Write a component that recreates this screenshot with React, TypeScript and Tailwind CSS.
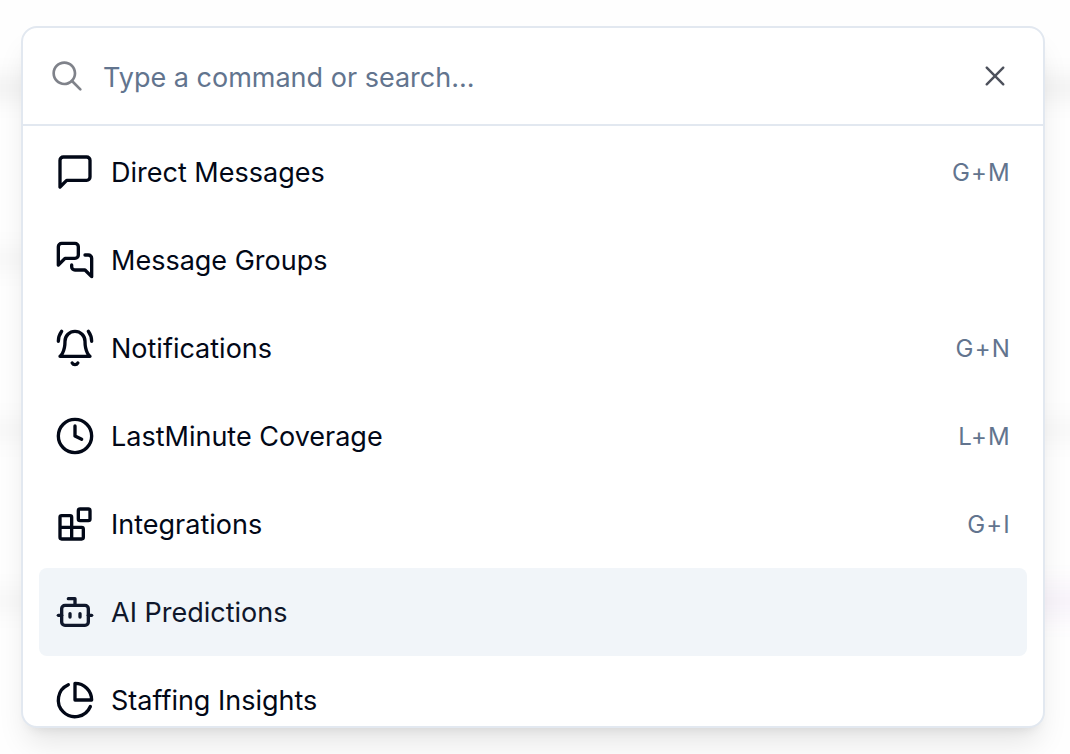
import { useState } from 'react'
import type { ReactNode } from 'react'
import { RxCross2, RxMagnifyingGlass } from 'react-icons/rx'
import { Clock } from 'lucide-react'

type Command = {
  label: string
  icon: ReactNode
  shortcut?: string
}

function Icon({ children }: { children: ReactNode }) {
  return (
    <svg viewBox="0 0 24 24" fill="none" stroke="currentColor" strokeWidth="2" strokeLinecap="round" strokeLinejoin="round" className="size-10 shrink-0" aria-hidden="true">
      {children}
    </svg>
  )
}

const commands: Command[] = [
  {
    label: 'Direct Messages',
    shortcut: 'G+M',
    icon: (
      <Icon>
        <path d="M21 15a2 2 0 0 1-2 2H7l-4 4V5a2 2 0 0 1 2-2h14a2 2 0 0 1 2 2z" />
      </Icon>
    ),
  },
  {
    label: 'Message Groups',
    icon: (
      <Icon>
        <path d="M14 9a2 2 0 0 1-2 2H6l-4 4V4c0-1.1.9-2 2-2h8a2 2 0 0 1 2 2v5Z" />
        <path d="M18 9h2a2 2 0 0 1 2 2v11l-4-4h-6a2 2 0 0 1-2-2v-1" />
      </Icon>
    ),
  },
  {
    label: 'Notifications',
    shortcut: 'G+N',
    icon: (
      <Icon>
        <path d="M6 8a6 6 0 0 1 12 0c0 7 3 9 3 9H3s3-2 3-9" />
        <path d="M10.3 21a1.94 1.94 0 0 0 3.4 0" />
        <path d="M4 2C2.8 3.7 2 5.7 2 8" />
        <path d="M22 8c0-2.3-.8-4.3-2-6" />
      </Icon>
    ),
  },
  { label: 'LastMinute Coverage', shortcut: 'L+M', icon: <Clock className="size-10 shrink-0" /> },
  {
    label: 'Integrations',
    shortcut: 'G+I',
    icon: (
      <Icon>
        <rect width="7" height="7" x="14" y="3" rx="1" />
        <path d="M10 21V8a1 1 0 0 0-1-1H4a1 1 0 0 0-1 1v12a1 1 0 0 0 1 1h12a1 1 0 0 0 1-1v-5a1 1 0 0 0-1-1H3" />
      </Icon>
    ),
  },
  {
    label: 'AI Predictions',
    icon: (
      <Icon>
        <path d="M12 8V4H8" />
        <rect width="16" height="12" x="4" y="8" rx="2" />
        <path d="M2 14h2" />
        <path d="M20 14h2" />
        <path d="M15 13v2" />
        <path d="M9 13v2" />
      </Icon>
    ),
  },
  {
    label: 'Staffing Insights',
    icon: (
      <Icon>
        <path d="M21.21 15.89A10 10 0 1 1 8 2.83" />
        <path d="M22 12A10 10 0 0 0 12 2v10z" />
      </Icon>
    ),
  },
]

// blurred page rows that show on both sides of the dialog
function Backdrop() {
  return (
    <div className="absolute inset-0 overflow-hidden bg-[#fefefe]" aria-hidden="true">
      <div className="-mx-8 flex flex-col gap-[155px] pt-20 blur-md">
        <div className="h-4 bg-black/7" />
        <div className="mr-20 h-4 bg-black/4" />
        <div className="h-4 bg-black/4" />
        <div className="flex h-4 items-center">
          <div className="h-4 flex-1 bg-black/4" />
          <div className="h-8 w-20 bg-purple-800/5" />
        </div>
      </div>
    </div>
  )
}

export default function App() {
  const [query, setQuery] = useState('')
  const [active, setActive] = useState('AI Predictions')

  const results = commands.filter(c => c.label.toLowerCase().includes(query.toLowerCase()))

  return (
    <main className="relative min-h-screen overflow-hidden pt-[26px] pr-[25px] pl-[21px] font-[Inter,sans-serif]">
      <Backdrop />

      <div role="dialog" aria-label="Command menu" className="relative overflow-hidden rounded-2xl border-2 border-slate-200 bg-white text-[#020817] shadow-[0_20px_30px_-6px_rgb(0_0_0/0.1),0_8px_12px_-8px_rgb(0_0_0/0.1)]">
        {/* Search */}
        <div className="flex h-[98px] items-center border-b-2 border-slate-200 pr-8 pl-6">
          <RxMagnifyingGlass className="mr-4 size-10 shrink-0 opacity-50" />
          <input
            type="text"
            aria-label="Search commands"
            placeholder="Type a command or search..."
            value={query}
            onChange={e => setQuery(e.target.value)}
            className="h-20 min-w-0 flex-1 bg-transparent pt-0.5 text-[27px] outline-none placeholder:text-slate-500"
          />
          <button type="button" aria-label="Close" className="opacity-70" onClick={() => setQuery('')}>
            <RxCross2 className="size-8" />
          </button>
        </div>

        {/* Results */}
        <ul className="max-h-[600px] overflow-hidden px-4 pt-0.5">
          {results.map(c => (
            <li key={c.label}>
              <button
                type="button"
                onMouseEnter={() => setActive(c.label)}
                className={`flex h-[88px] w-full items-center gap-4 rounded-lg px-4 text-left text-[27px] ${active === c.label ? 'bg-slate-100 text-slate-900' : ''}`}
              >
                {c.icon}
                <span className="pt-0.5">{c.label}</span>
                {c.shortcut && <kbd className="ml-auto pt-0.5 font-[Inter,sans-serif] text-2xl tracking-wider text-slate-500">{c.shortcut}</kbd>}
              </button>
            </li>
          ))}
        </ul>
      </div>
    </main>
  )
}
